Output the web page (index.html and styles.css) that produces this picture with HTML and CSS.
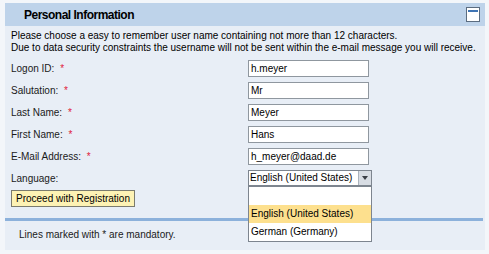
FILE: index.html
```html
<!DOCTYPE html>
<html lang="en">
<head>
  <meta charset="UTF-8" />
  <title>Personal Information</title>
  <link rel="stylesheet" href="styles.css">
</head>
<body>
  <div class="panel">
    <div class="panel-head">
      <span class="panel-title">Personal Information</span>
      <span class="collapse-btn"><span class="collapse-bar"></span></span>
    </div>

    <div class="panel-body">
      <p class="intro">Please choose a easy to remember user name containing not more than 12 characters.<br>
      Due to data security constraints the username will not be sent within the e-mail message you will receive.</p>

      <div class="form">
        <div class="row">
          <label class="label">Logon ID: <span class="req">*</span></label>
          <div class="field"><span class="input">h.meyer</span></div>
        </div>
        <div class="row">
          <label class="label">Salutation: <span class="req">*</span></label>
          <div class="field"><span class="input">Mr</span></div>
        </div>
        <div class="row">
          <label class="label">Last Name: <span class="req">*</span></label>
          <div class="field"><span class="input">Meyer</span></div>
        </div>
        <div class="row">
          <label class="label">First Name: <span class="req">*</span></label>
          <div class="field"><span class="input">Hans</span></div>
        </div>
        <div class="row">
          <label class="label">E-Mail Address: <span class="req">*</span></label>
          <div class="field"><span class="input">h_meyer@daad.de</span></div>
        </div>
        <div class="row">
          <label class="label">Language:</label>
          <div class="field">
            <div class="select">
              <span class="select-value">English (United States)</span>
              <span class="select-arrow"></span>
            </div>
            <ul class="dropdown">
              <li class="option">&nbsp;</li>
              <li class="option selected">English (United States)</li>
              <li class="option">German (Germany)</li>
            </ul>
          </div>
        </div>
      </div>

      <button class="proceed">Proceed with Registration</button>
    </div>

    <div class="divider"></div>
    <p class="note">Lines marked with * are mandatory.</p>
  </div>
</body>
</html>
```

FILE: styles.css
```css
html, body {
  margin: 0;
  padding: 0;
}

body {
  background: #f3f6fa;
  font-family: "Liberation Sans", Arial, sans-serif;
  font-size: 10px;
  color: #000;
  padding: 3px 4px 4px 5px;
  width: 480px;
}

.panel {
  background: #e8eef6;
  height: 247px;
}

.panel-head {
  height: 23px;
  background: #bed3ea;
  display: flex;
  align-items: center;
  justify-content: space-between;
  padding: 0 5px 0 19px;
}

.panel-title {
  font-size: 12px;
  font-weight: bold;
  letter-spacing: -0.5px;
  color: #000;
  padding-top: 1px;
}

.collapse-btn {
  width: 12px;
  height: 11px;
  padding-top: 2px;
  border: 1px solid #5b6c80;
  background: #fff;
  display: flex;
  justify-content: center;
}

.collapse-bar {
  width: 10px;
  height: 2px;
  background: #3f74b4;
}

.panel-body {
  padding: 0 6px;
}

.intro {
  margin: 0;
  padding-top: 4px;
  line-height: 12px;
  color: #000;
}

.form {
  margin-top: 3px;
}

.row {
  display: flex;
  align-items: center;
  height: 22px;
}

.label {
  width: 237px;
  color: #1a1a1a;
}

.req {
  color: #e0203a;
  margin-left: 3px;
}

.field {
  position: relative;
}

.input {
  display: block;
  width: 115px;
  height: 15px;
  line-height: 15px;
  padding: 0 2px;
  background: #fff;
  border: 1px solid #8f979f;
}

.select {
  display: flex;
  width: 122px;
  height: 14px;
  background: #fff;
  border: 1px solid #7d858f;
}

.select-value {
  flex: 1;
  line-height: 14px;
  padding-left: 1px;
  white-space: nowrap;
}

.select-arrow {
  width: 12px;
  background: #d8dde4;
  border-left: 1px solid #aab2bc;
  position: relative;
}

.select-arrow::after {
  content: "";
  position: absolute;
  left: 3px;
  top: 5px;
  border-left: 3px solid transparent;
  border-right: 3px solid transparent;
  border-top: 4px solid #3a3f46;
}

.dropdown {
  position: absolute;
  top: 16px;
  left: 0;
  width: 122px;
  margin: 0;
  padding: 0;
  list-style: none;
  background: #fff;
  border: 1px solid #7d858f;
  z-index: 2;
}

.option {
  height: 18px;
  line-height: 18px;
  padding-left: 2px;
}

.option.selected {
  background: #fde08e;
}

.proceed {
  display: block;
  margin: 1px 0 0;
  height: 17px;
  padding: 0 4px;
  font-family: inherit;
  font-size: 10px;
  color: #000;
  background: #fdf2b4;
  border: 1px solid #7b7b6e;
  border-radius: 0;
}

.divider {
  margin: 11px 2px 0 0;
  height: 3px;
  background: #8cb1db;
}

.note {
  margin: 0;
  padding: 8px 0 0 14px;
  color: #1a1a1a;
}
```
